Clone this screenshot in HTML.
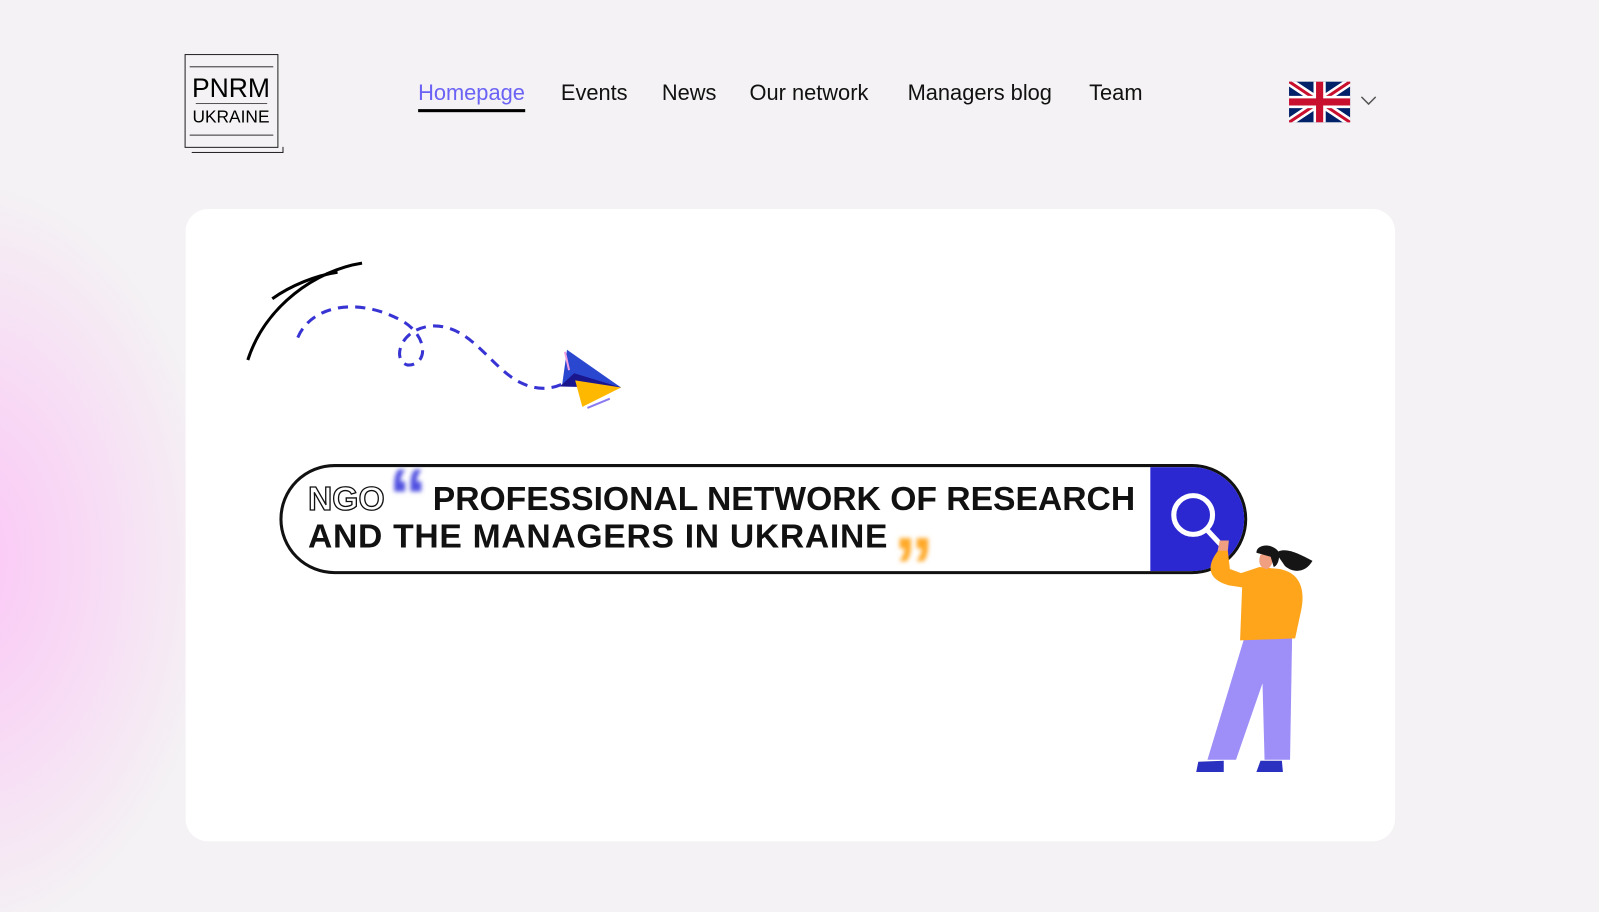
<!DOCTYPE html>
<html><head><meta charset="utf-8"><style>
*{margin:0;padding:0;box-sizing:border-box}
body{width:1599px;height:912px;overflow:hidden;font-family:"Liberation Sans",sans-serif;
background:radial-gradient(ellipse 260px 380px at -40px 560px,#fbc6f6 0%,#f8d8f5 45%,rgba(245,243,245,0) 100%),#f4f2f4;position:relative}
#w{position:absolute;left:0;top:0;width:1568px;height:894px;transform:scale(1.0198);transform-origin:0 0}
.logo{position:absolute;left:181px;top:53px;width:92px;height:92px;border:1.5px solid #222;}
.nav{position:absolute;top:79px;left:410px;font-size:21.4px;color:#111}
.nav span{position:absolute;white-space:nowrap}
.card{position:absolute;left:182px;top:205px;width:1186px;height:620px;background:#fff;border-radius:22px}
.bar{position:absolute;left:274px;top:455px;width:949px;height:108px;border:3px solid #111;border-radius:54px;overflow:hidden;background:#fff}
.blue{position:absolute;right:0;top:0;width:92px;height:100%;background:#2b28d2}
.t{position:absolute;left:302px;font-size:33px;font-weight:bold;color:#111;letter-spacing:0px;white-space:nowrap}
</style></head><body><div id="w">
<div class="logo">
<div style="position:absolute;left:4px;right:4px;top:11px;border-top:1px solid #333"></div>
<div style="position:absolute;left:4px;right:4px;bottom:11px;border-top:1px solid #333"></div>
<div style="position:absolute;left:6px;right:-6px;bottom:-6px;height:6px;border:1.5px solid #222;border-top:none;border-left:none"></div>
<div style="position:absolute;left:0;width:89px;top:18px;text-align:center;font-size:26px;line-height:28px">PNRM</div>
<div style="position:absolute;left:10px;right:10px;top:47px;border-top:1px solid #555"></div>
<div style="position:absolute;left:0;width:89px;top:51px;text-align:center;font-size:17px;line-height:20px">UKRAINE</div>
</div>
<div class="nav">
<span style="left:0;color:#6b63f5">Homepage</span>
<div style="position:absolute;left:0;top:28px;width:105px;height:3px;background:#000"></div>
<span style="left:140px">Events</span>
<span style="left:239px">News</span>
<span style="left:325px">Our network</span>
<span style="left:480px">Managers blog</span>
<span style="left:658px">Team</span>
</div>
<svg style="position:absolute;left:1264px;top:80px" width="60" height="40" viewBox="0 0 60 40">
<rect width="60" height="40" fill="#012169"/>
<path d="M0 0L60 40M60 0L0 40" stroke="#fff" stroke-width="8"/>
<path d="M0 0L60 40M60 0L0 40" stroke="#c8102e" stroke-width="3"/>
<path d="M30 0V40M0 20H60" stroke="#fff" stroke-width="12"/>
<path d="M30 0V40M0 20H60" stroke="#c8102e" stroke-width="7"/>
</svg>
<svg style="position:absolute;left:1334px;top:94px" width="16" height="10"><path d="M1 1L8 8L15 1" fill="none" stroke="#555" stroke-width="1.5"/></svg>
<div class="card"></div>
<svg style="position:absolute;left:230px;top:240px" width="400" height="170">
<path d="M13 113C30 60 80 25 125 18" fill="none" stroke="#000" stroke-width="3"/>
<path d="M37 53C55 40 80 30 101 27" fill="none" stroke="#000" stroke-width="3"/>
<path d="M62 91C75 60 120 50 165 75C190 90 190 118 170 118C155 115 160 85 190 80C230 75 250 120 280 135C300 145 315 140 325 135" fill="none" stroke="#3834d4" stroke-width="3" stroke-dasharray="10 7"/>
<g transform="translate(-9,-7)">
<path d="M335 110L388 147L330 146Z" fill="#2a47d0"/>
<path d="M328 146L342 133L388 147Z" fill="#1a168e"/>
<path d="M343 140L388 147L350 166Z" fill="#ffb800"/>
<path d="M333 112L337 130" stroke="#f3a0e0" stroke-width="2"/>
<path d="M355 167L377 158" stroke="#8a7cf0" stroke-width="2"/>
</g>
</svg>
<div class="bar"><div class="blue"></div></div>
<svg style="position:absolute;left:1140px;top:478px" width="70" height="70"><circle cx="30" cy="27" r="19" fill="none" stroke="#fff" stroke-width="5"/><path d="M43 41L58 57" stroke="#fff" stroke-width="5" stroke-linecap="round"/></svg>
<div class="t" style="top:470px"><span style="color:#fff;-webkit-text-stroke:1.3px #111">NGO</span><span style="display:inline-block;width:38px"></span> PROFESSIONAL NETWORK OF RESEARCH</div>
<div class="t" style="top:507px;letter-spacing:0.7px">AND THE MANAGERS IN UKRAINE</div>
<div style="position:absolute;left:381px;top:452px;font-size:76px;line-height:72px;font-weight:bold;color:#5050e0;filter:blur(2px)">“</div>
<div style="position:absolute;left:876px;top:520px;font-size:80px;line-height:72px;font-weight:bold;color:#ffa928;filter:blur(2px)">”</div>
<svg style="position:absolute;left:1120px;top:500px" width="200" height="270">
<path d="M100 126L147 126L145 245L120 245L118 170L92 245L64 245Z" fill="#9d8ff7"/>
<path d="M53 257L55 247L80 246L80 257Z" fill="#2a30c0"/>
<path d="M112 257L116 246L137 246L138 257Z" fill="#2a30c0"/>
<path d="M76 38C62 55 64 68 85 74L98 76L96 128L150 126L156 98C160 78 155 62 135 58L115 56L97 62L86 58L84 40Z" fill="#ffa51c"/>
<path d="M74 40L84 40L85 30L76 30Z" fill="#f0a080"/>
<path d="M116 44C113 52 116 58 123 58C129 54 129 46 125 42Z" fill="#f0a080"/>
<path d="M112 42C112 34 126 32 133 40C136 46 133 55 129 56L126 46Z" fill="#151515"/>
<path d="M131 42C140 36 152 42 167 50C160 62 148 62 140 55Z" fill="#151515"/>
</svg>
</div></body></html>
